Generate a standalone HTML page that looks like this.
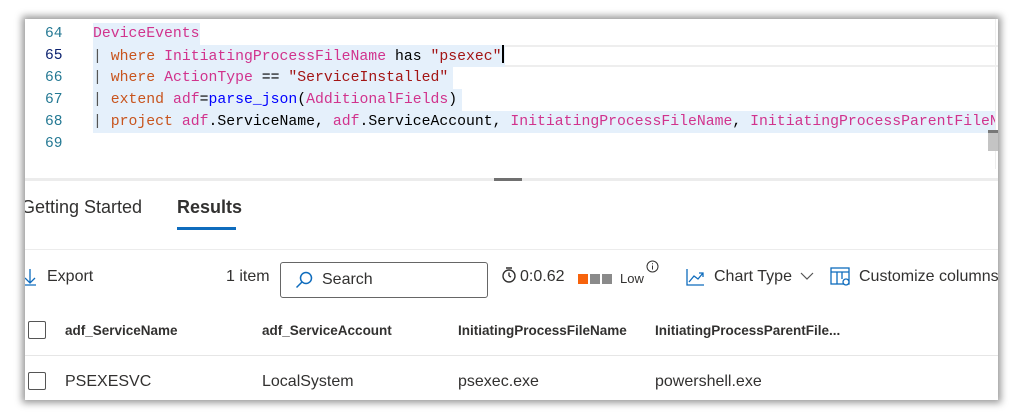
<!DOCTYPE html>
<html><head><meta charset="utf-8"><style>
*{margin:0;padding:0;box-sizing:border-box}
body{width:1024px;height:420px;background:#fff;position:relative;overflow:hidden;font-family:"Liberation Sans",sans-serif}
.panel{position:absolute;left:25px;top:19px;width:973px;height:381px;background:#fff;box-shadow:0 0 7px 3px rgba(0,0,0,.4);overflow:hidden}
.a{position:absolute;white-space:nowrap}
.ln{font-family:"Liberation Mono",monospace;font-size:14.6px;color:#237893;left:20px;width:20px}
.code{font-family:"Liberation Mono",monospace;font-size:14.8px;left:68px;color:#000;line-height:22px}
.hl{position:absolute;background:#e5f0fb;height:22px;left:68px}
.k{color:#c8541d}.t{color:#d1338d}.s{color:#a31515}.f{color:#0000ff}.p{color:#555}
.ui{font-size:16px;color:#323130}
.hd{font-size:13.5px;color:#323130;font-weight:bold}
.cb{position:absolute;width:18px;height:18px;border:1.5px solid #555;border-radius:2px}
</style></head><body>
<div class="panel">
 <div class="hl" style="top:4px;width:107px"></div>
 <div class="a" style="left:68px;top:26px;width:905px;height:22px;border-top:2px solid #eeeeee;border-bottom:2px solid #eeeeee"></div>
 <div class="hl" style="top:26px;width:412px"></div>
 <div class="hl" style="top:48px;width:360px"></div>
 <div class="hl" style="top:70px;width:369px"></div>
 <div class="hl" style="top:92px;width:902px"></div>
 <div class="a ln" style="top:4px;line-height:22px">64</div>
 <div class="a ln" style="top:26px;line-height:22px;color:#0b216f">65</div>
 <div class="a ln" style="top:48px;line-height:22px">66</div>
 <div class="a ln" style="top:70px;line-height:22px">67</div>
 <div class="a ln" style="top:92px;line-height:22px">68</div>
 <div class="a ln" style="top:114px;line-height:22px">69</div>
 <div class="a code" style="top:4px"><span class="t">DeviceEvents</span></div>
 <div class="a code" style="top:26px"><span class="p">|</span> <span class="k">where</span> <span class="t">InitiatingProcessFileName</span> has <span class="s">"psexec"</span><span style="display:inline-block;width:2px;height:18px;background:#000;vertical-align:-3px"></span></div>
 <div class="a code" style="top:48px"><span class="p">|</span> <span class="k">where</span> <span class="t">ActionType</span> == <span class="s">"ServiceInstalled"</span></div>
 <div class="a code" style="top:70px"><span class="p">|</span> <span class="k">extend</span> <span class="t">adf</span>=<span class="f">parse_json</span>(<span class="t">AdditionalFields</span>)</div>
 <div class="a code" style="top:92px;width:902px;overflow:hidden"><span class="p">|</span> <span class="k">project</span> <span class="t">adf</span>.ServiceName, <span class="t">adf</span>.ServiceAccount, <span class="t">InitiatingProcessFileName</span>, <span class="t">InitiatingProcessParentFileName</span></div>
 <div class="a" style="left:970px;top:0;width:1px;height:150px;background:#eee"></div>
 <div class="a" style="left:963px;top:111px;width:10px;height:21px;background:#c4c4c4;border-top:3px solid #777"></div>
 <div class="a" style="left:0;top:159px;width:973px;height:3px;background:#ececec"></div>
 <div class="a" style="left:469px;top:159px;width:28px;height:3px;background:#707070"></div>
 <div class="a ui" style="left:-4px;top:178px;font-size:18px">Getting Started</div>
 <div class="a ui" style="left:152px;top:178px;font-size:18px;font-weight:bold">Results</div>
 <div class="a" style="left:152px;top:208px;width:59px;height:3px;background:#0f6cbd"></div>
 <div class="a" style="left:0;top:230px;width:973px;height:1px;background:#ececec"></div>
 <svg class="a" style="left:-2px;top:249px" width="14" height="18"><path d="M7 1V15M2 10l5 5 5-5M1 17H13" stroke="#0f6cbd" stroke-width="1.3" fill="none"/></svg>
 <div class="a ui" style="left:22px;top:249px">Export</div>
 <div class="a ui" style="left:201px;top:249px">1 item</div>
 <div class="a" style="left:255px;top:243px;width:208px;height:36px;border:1.5px solid #666;border-radius:3px"></div>
 <svg class="a" style="left:270px;top:252px" width="18" height="18"><circle cx="11" cy="7" r="5.5" stroke="#0f6cbd" stroke-width="1.5" fill="none"/><path d="M7 11L1.5 16.5" stroke="#0f6cbd" stroke-width="1.5"/></svg>
 <div class="a ui" style="left:297px;top:252px">Search</div>
 <svg class="a" style="left:476px;top:247px" width="16" height="18"><circle cx="8" cy="10" r="6" stroke="#323130" stroke-width="1.4" fill="none"/><path d="M5 2h6M8 10V6.5M8 10l2 1" stroke="#323130" stroke-width="1.4" fill="none"/></svg>
 <div class="a ui" style="left:495px;top:249px">0:0.62</div>
 <div class="a" style="left:553px;top:255px;width:10px;height:10px;background:#f7630c"></div>
 <div class="a" style="left:565px;top:255px;width:10px;height:10px;background:#8a8a8a"></div>
 <div class="a" style="left:577px;top:255px;width:10px;height:10px;background:#8a8a8a"></div>
 <div class="a" style="left:595px;top:252px;font-size:13px;color:#323130">Low</div>
 <svg class="a" style="left:621px;top:241px" width="13" height="13"><circle cx="6.5" cy="6.5" r="5.5" stroke="#323130" fill="none"/><path d="M6.5 5.5v4M6.5 3.2v1" stroke="#323130"/></svg>
 <svg class="a" style="left:661px;top:249px" width="19" height="18"><path d="M1 1V17H18M3 14l5-6 4 3 5-6M13 5h4v4" stroke="#0f6cbd" stroke-width="1.3" fill="none"/></svg>
 <div class="a ui" style="left:689px;top:249px">Chart Type</div>
 <svg class="a" style="left:775px;top:253px" width="14" height="9"><path d="M1 1l6 6 6-6" stroke="#555" stroke-width="1.2" fill="none"/></svg>
 <svg class="a" style="left:805px;top:248px" width="21" height="20"><rect x="1" y="1" width="18" height="16" stroke="#0f6cbd" stroke-width="1.3" fill="none"/><path d="M1 5H19M7 5V17M12 5V12" stroke="#0f6cbd" stroke-width="1.3"/><circle cx="16" cy="15" r="3" fill="#fff" stroke="#0f6cbd" stroke-width="1.3"/></svg>
 <div class="a ui" style="left:834px;top:249px">Customize columns</div>
 <div class="cb" style="left:3px;top:302px"></div>
 <div class="a hd" style="left:40px;top:304px">adf_ServiceName</div>
 <div class="a hd" style="left:237px;top:304px">adf_ServiceAccount</div>
 <div class="a hd" style="left:433px;top:304px">InitiatingProcessFileName</div>
 <div class="a hd" style="left:630px;top:304px">InitiatingProcessParentFile...</div>
 <div class="a" style="left:0;top:336px;width:973px;height:1px;background:#e6e6e6"></div>
 <div class="cb" style="left:3px;top:353px"></div>
 <div class="a ui" style="left:40px;top:354px">PSEXESVC</div>
 <div class="a ui" style="left:237px;top:354px">LocalSystem</div>
 <div class="a ui" style="left:433px;top:354px">psexec.exe</div>
 <div class="a ui" style="left:630px;top:354px">powershell.exe</div>
</div>
</body></html>
